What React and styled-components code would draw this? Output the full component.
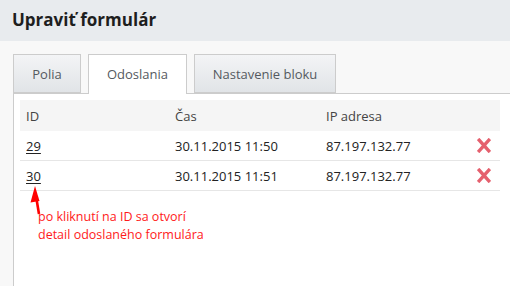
import React from "react";
import styled, { createGlobalStyle } from "styled-components";

const Global = createGlobalStyle`
  html, body { margin: 0; padding: 0; }
  body {
    background: #f8f8f8;
    font-family: "Open Sans", "Noto Sans", sans-serif;
    color: #333;
    overflow: hidden;
  }
`;

const Page = styled.div`
  width: 510px;
  height: 286px;
  display: flex;
  flex-direction: column;
`;

const Header = styled.header`
  height: 41px;
  flex: none;
  background: #e8ebee;
  display: flex;
  align-items: center;
  padding-left: 12px;
`;

const Title = styled.h1`
  margin: 0;
  font-size: 17px;
  font-weight: 700;
  color: #1e1e1e;
  line-height: 1;
  transform: translateY(-1px);
`;

const Main = styled.main`
  flex: 1;
  display: flex;
  flex-direction: column;
  padding: 13px 0 0 13px;
`;

const Tabs = styled.div`
  display: flex;
  gap: 7px;
  height: 39px;
  position: relative;
  z-index: 1;
`;

const Tab = styled.div`
  box-sizing: border-box;
  height: ${(p) => (p.$active ? "40px" : "39px")};
  width: ${(p) => p.$w}px;
  border: 1px solid #cccccc;
  border-bottom: ${(p) => (p.$active ? "none" : "1px solid #cccccc")};
  background: ${(p) =>
    p.$active ? "#ffffff" : "linear-gradient(#f3f4f6, #e1e4e7)"};
  display: flex;
  align-items: center;
  justify-content: center;
  font-size: 13px;
  color: #555a60;
  padding-bottom: ${(p) => (p.$active ? "1px" : "0")};
`;

const Panel = styled.section`
  flex: 1;
  background: #ffffff;
  border-top: 1px solid #cccccc;
  border-left: 1px solid #cccccc;
  padding: 6px 10px 0 6px;
  position: relative;
`;

const Grid = styled.div`
  display: grid;
  grid-template-columns: 149px 151px 151px 1fr;
`;

const HeadRow = styled(Grid)`
  height: 31px;
  background: #f5f5f5;
  align-items: center;
  font-size: 13px;
  color: #444;
`;

const Row = styled(Grid)`
  height: 29px;
  border-bottom: 1px solid #e6e6e6;
  align-items: center;
  font-size: 13px;
  color: #222;
`;

const Cell = styled.div`
  padding-left: 6px;
  display: flex;
  align-items: center;
`;

const IdLink = styled.a`
  color: #222;
  text-decoration: underline;
  text-underline-offset: 2px;
  cursor: pointer;
`;

const Note = styled.div`
  margin: 17px 0 0 18px;
  color: #ff1a1a;
  font-family: "Open Sans", "Noto Sans", sans-serif;
  font-size: 12.5px;
  line-height: 18px;
`;

const ArrowSvg = styled.svg`
  position: absolute;
  left: 15px;
  top: 91px;
`;

const DeleteIcon = () => (
  <svg width="14" height="15" viewBox="0 0 14 15">
    <path
      d="M2.2 2.2 L11.8 12.8 M11.8 2.2 L2.2 12.8"
      stroke="#e5606e"
      strokeWidth="3.4"
      strokeLinecap="square"
    />
  </svg>
);

const rows = [
  { id: "29", time: "30.11.2015 11:50", ip: "87.197.132.77" },
  { id: "30", time: "30.11.2015 11:51", ip: "87.197.132.77" },
];

export default function App() {
  return (
    <Page>
      <Global />
      <Header>
        <Title>Upraviť formulár</Title>
      </Header>
      <Main>
        <Tabs>
          <Tab $w={68}>Polia</Tab>
          <Tab $w={99} $active>
            Odoslania
          </Tab>
          <Tab $w={142}>Nastavenie bloku</Tab>
        </Tabs>
        <Panel>
          <HeadRow>
            <Cell>ID</Cell>
            <Cell>Čas</Cell>
            <Cell>IP adresa</Cell>
            <Cell />
          </HeadRow>
          {rows.map((r) => (
            <Row key={r.id}>
              <Cell>
                <IdLink>{r.id}</IdLink>
              </Cell>
              <Cell>{r.time}</Cell>
              <Cell>{r.ip}</Cell>
              <Cell>
                <DeleteIcon />
              </Cell>
            </Row>
          ))}
          <Note>
            po kliknutí na ID sa otvorí
            <br />
            detail odoslaného formulára
          </Note>
          <ArrowSvg width="14" height="32" viewBox="0 0 14 32">
            <path d="M6 1 L1.5 17.5 L10.5 16 Z" fill="#ff0000" />
            <path d="M7.5 14 L10 29" stroke="#ff0000" strokeWidth="2.6" />
          </ArrowSvg>
        </Panel>
      </Main>
    </Page>
  );
}
